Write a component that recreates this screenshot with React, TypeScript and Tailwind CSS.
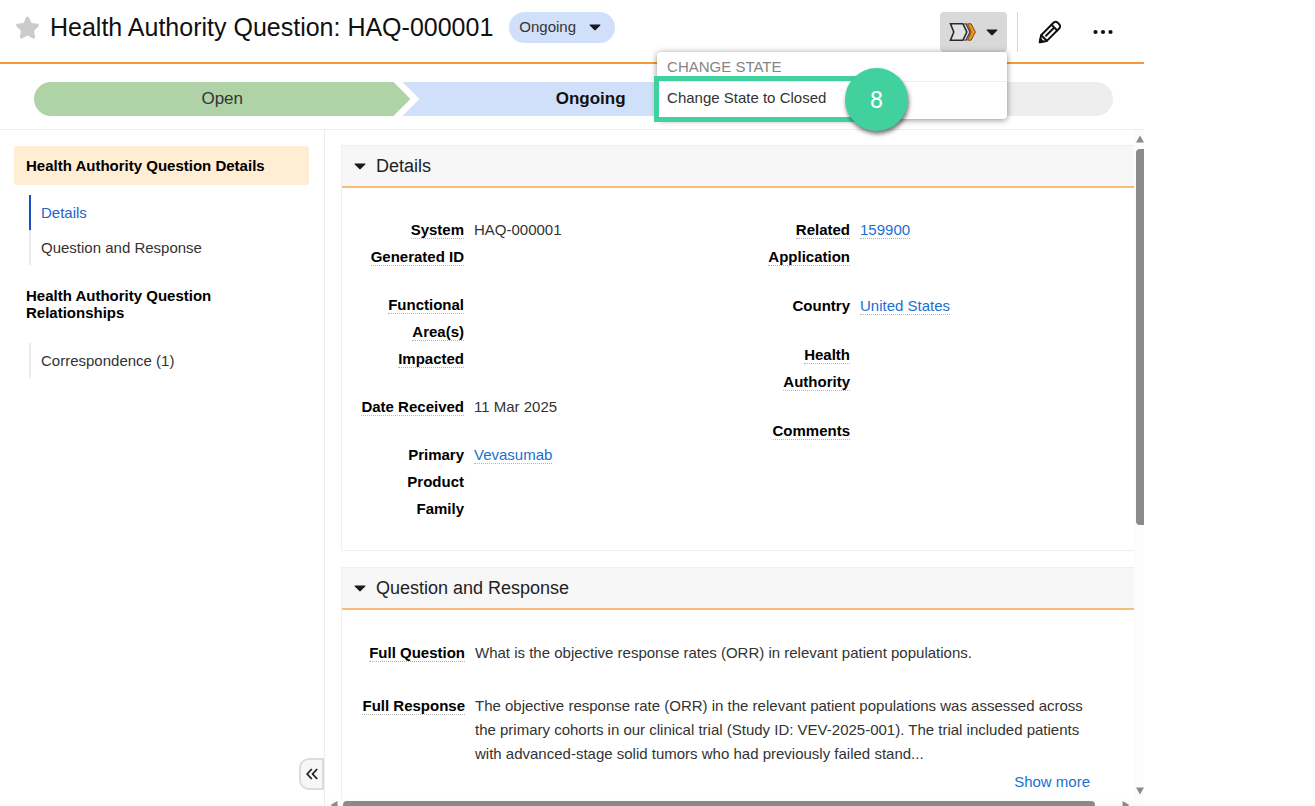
import { ReactNode } from "react"
import clsx from "clsx"
import { FaStar } from "react-icons/fa6"

interface Field {
    label: string
    value?: string
    link?: boolean
    plain?: boolean
}

const leftFields: Field[] = [
    { label: "System Generated ID", value: "HAQ-000001" },
    { label: "Functional Area(s) Impacted" },
    { label: "Date Received", value: "11 Mar 2025" },
    { label: "Primary Product Family", value: "Vevasumab", link: true, plain: true },
]

const rightFields: Field[] = [
    { label: "Related Application", value: "159900", link: true },
    { label: "Country", value: "United States", link: true, plain: true },
    { label: "Health Authority" },
    { label: "Comments" },
]

function Caret({ className }: { className?: string }) {
    return (
        <svg viewBox="0 0 12 7" className={clsx("w-3 h-[7px] shrink-0", className)} fill="#1a1a1a" aria-hidden="true">
            <path d="M1.2 0.5h9.6c.6 0 .8.6.4 1L6.7 6.100c-.4.4-1 .4-1.400 0L.8 1.500C.4 1.100.6.5 1.200.5z" />
        </svg>
    )
}

function WorkflowIcon() {
    return (
        <svg viewBox="0 0 28 20" className="w-7 h-5" fill="none" aria-hidden="true">
            <path d="M1.5 1.8H14l3.800 8.200-3.800 8.200H1.500L4.800 10z" fill="#e2e2e2" stroke="#2b2b2b" strokeWidth="1.6" />
            <path d="M15.500 1.800h1.500l4 8.200-4 8.200h-1.500" stroke="#3a3a3a" strokeWidth="1.2" />
            <path d="M18.500 1.800h3.600l4.300 8.200-4.300 8.200h-3.600l3.700-8.200z" fill="#ff8f0f" stroke="#5a4326" strokeWidth=".9" />
        </svg>
    )
}

function PencilIcon() {
    return (
        <svg viewBox="0 0 24 24" className="size-6" fill="none" stroke="#111" strokeWidth="2" strokeLinejoin="round" strokeLinecap="round" aria-hidden="true">
            <path d="M1.8 22.2l1.3-7L15.5 2.8c1.2-1.2 3-1.2 4.2 0l1.5 1.5c1.2 1.2 1.2 3 0 4.200L8.800 20.900z" />
            <path d="M13.5 4.8l5.7 5.7M3.2 15.2l5.6 5.600M15 8.800l-7 7" />
            <path d="M1.8 22.2l.6-3.2 2.6 2.600z" fill="#111" />
        </svg>
    )
}

function FieldRow({ field }: { field: Field }) {
    return (
        <div className="flex gap-[10px] leading-[27px]">
            <dt className="w-[106px] shrink-0 text-right font-bold text-black">
                <span className={field.plain ? "" : "border-b border-dotted border-[#b5b5b5]"}>{field.label}</span>
            </dt>
            <dd>
                {field.link ? (
                    <a href="#" className="text-[#1a6fd0] border-b border-dotted border-[#b5b5b5]">{field.value}</a>
                ) : field.value}
            </dd>
        </div>
    )
}

function Section({ title, className, children }: { title: string, className?: string, children: ReactNode }) {
    return (
        <section className={clsx("border-t border-l border-[#efefef]", className)}>
            <h2 className="bg-[#f7f7f7] border-b-2 border-[#fbbb78]">
                <button className="flex items-center gap-[10px] w-full h-10 pl-3 text-lg text-[#222]">
                    <Caret />
                    {title}
                </button>
            </h2>
            {children}
        </section>
    )
}

function Arrow({ className }: { className?: string }) {
    return (
        <svg viewBox="0 0 8 8" className={clsx("size-2 shrink-0", className)} fill="#8a8a8a" aria-hidden="true">
            <path d="M4 .5L8 7.5H0z" />
        </svg>
    )
}

export default function App() {
    return (
        <div className="flex flex-col w-[87%] h-screen overflow-hidden bg-white text-[15px] text-[#333] font-['Liberation_Sans',Arial,sans-serif]">
            <header className="flex shrink-0 items-start justify-between h-16 pt-3 pl-[15px] pr-[31px] border-b-2 border-[#f29a38]">
                <div className="flex items-center h-[31px]">
                    <button aria-label="Favorite">
                        <FaStar className="size-[25px] text-[#cbcbcb]" />
                    </button>
                    <h1 className="ml-[10px] text-[25px] text-[#111] whitespace-nowrap">Health Authority Question: HAQ-000001</h1>
                    <div className="relative ml-4">
                        <select aria-label="State" className="appearance-none h-[31px] w-[106px] pl-[10px] rounded-full bg-[#d1e0fa]">
                            <option>Ongoing</option>
                        </select>
                        <Caret className="absolute right-[14px] top-3 pointer-events-none" />
                    </div>
                </div>

                <div className="flex items-center">
                    <div className="relative">
                        <button aria-label="Change state" className="flex items-center justify-between w-[67px] h-10 pl-[9px] pr-[9px] rounded-[4px] bg-[#d9d9d9]">
                            <WorkflowIcon />
                            <Caret />
                        </button>
                        <div className="absolute z-10 right-0 top-full w-[350px] rounded-[4px] bg-white shadow-[0_1px_6px_rgba(0,0,0,0.45)]">
                            <h3 className="h-[30px] pl-[10px] leading-[30px] text-[#858585] border-b border-[#eee]">CHANGE STATE</h3>
                            <div className="relative">
                                <button className="block w-full h-[37px] pl-[10px] pb-1 text-left">Change State to Closed</button>
                                <div className="absolute -left-[3px] -top-[6px] w-[220px] h-[46px] border-5 border-[#41d19f] pointer-events-none"></div>
                                <div className="absolute left-[188px] -top-[14px] flex items-center justify-center size-[63px] rounded-full bg-[#41d19f] text-white text-2xl font-[Roboto,sans-serif] shadow-[1px_3px_4px_rgba(0,0,0,0.55)] pointer-events-none">8</div>
                            </div>
                        </div>
                    </div>
                    <div className="w-px h-10 ml-[10px] bg-[#d6d6d6]"></div>
                    <button aria-label="Edit" className="ml-5">
                        <PencilIcon />
                    </button>
                    <button aria-label="More actions" className="ml-[31px]">
                        <svg viewBox="0 0 20 6" className="w-5 h-[6px]" fill="#111" aria-hidden="true">
                            <circle cx="2.5" cy="3" r="2.1" />
                            <circle cx="10" cy="3" r="2.1" />
                            <circle cx="17.5" cy="3" r="2.1" />
                        </svg>
                    </button>
                </div>
            </header>

            <ol className="flex shrink-0 pt-[18px] pb-[13px] pl-[34px] pr-[31px] text-[17px] leading-[34px] text-center border-b border-[#ededed]">
                <li className="flex-[11] h-[34px] rounded-l-full bg-[#b0d2a7] [clip-path:polygon(0_0,calc(100%-17px)_0,100%_50%,calc(100%-17px)_100%,0_100%)]">Open</li>
                <li className="flex-[11] h-[34px] -ml-2 bg-[#d1e0fa] font-bold text-[#111] [clip-path:polygon(0_0,calc(100%-17px)_0,100%_50%,calc(100%-17px)_100%,0_100%,17px_50%)]">Ongoing</li>
                <li className="flex-[10] h-[34px] -ml-2 rounded-r-full bg-[#ededed] [clip-path:polygon(0_0,100%_0,100%_100%,0_100%,17px_50%)]"></li>
            </ol>

            <div className="flex flex-1 min-h-0">
                <nav className="relative w-[325px] shrink-0 pt-4 border-r border-[#ededed]">
                    <h2 className="h-[39px] ml-[14px] mr-[15px] pl-3 leading-[40px] rounded-[3px] bg-[#ffedd4] font-bold text-black">Health Authority Question Details</h2>
                    <ul className="mt-[10px] ml-[29px] leading-[35px]">
                        <li><a href="#" className="block pl-[10px] border-l-2 border-[#1b4fc0] text-[#2563c9]">Details</a></li>
                        <li><a href="#" className="block pl-[10px] border-l-2 border-[#ebebeb]">Question and Response</a></li>
                    </ul>
                    <h2 className="mt-[22px] ml-[26px] w-[220px] leading-[17px] font-bold text-black">Health Authority Question Relationships</h2>
                    <ul className="mt-[22px] ml-[29px] leading-[35px]">
                        <li><a href="#" className="block pl-[10px] border-l-2 border-[#ebebeb]">Correspondence (1)</a></li>
                    </ul>
                    <button aria-label="Collapse panel" className="absolute right-0 bottom-4 flex items-center justify-center w-[25px] h-8 rounded-l-[10px] border-2 border-[#dcdcdc] bg-[#f7f7f7]">
                        <svg viewBox="0 0 12 12" className="size-3 shrink-0" fill="none" stroke="#222" strokeWidth="1.8" aria-hidden="true">
                            <path d="M5.8 1L1.2 6l4.6 5M11.2 1L6.6 6l4.600 5" />
                        </svg>
                    </button>
                </nav>

                <main className="flex flex-col flex-1 min-w-0">
                    <div className="flex flex-1 min-h-0">
                        <div className="flex-1 min-w-0 overflow-hidden pt-[15px] pl-4">
                            <Section title="Details" className="border-b">
                                <div className="grid grid-cols-2 py-[28px] pl-4 pr-1">
                                    <dl className="flex flex-col gap-[21px]">
                                        {leftFields.map(field => <FieldRow key={field.label} field={field} />)}
                                    </dl>
                                    <dl className="flex flex-col gap-[22px]">
                                        {rightFields.map(field => <FieldRow key={field.label} field={field} />)}
                                    </dl>
                                </div>
                            </Section>

                            <Section title="Question and Response" className="mt-4">
                                <dl className="flex flex-col gap-[29px] pt-[31px] pb-10 pl-4 pr-11 leading-6">
                                    <div className="flex gap-[10px]">
                                        <dt className="w-[107px] shrink-0 text-right font-bold text-black">
                                            <span className="border-b border-dotted border-[#b5b5b5]">Full Question</span>
                                        </dt>
                                        <dd>What is the objective response rates (ORR) in relevant patient populations.</dd>
                                    </div>
                                    <div className="flex gap-[10px]">
                                        <dt className="w-[107px] shrink-0 text-right font-bold text-black">
                                            <span className="border-b border-dotted border-[#b5b5b5]">Full Response</span>
                                        </dt>
                                        <dd className="flex-1">
                                            <p>The objective response rate (ORR) in the relevant patient populations was assessed across the primary cohorts in our clinical trial (Study ID: VEV-2025-001). The trial included patients with advanced-stage solid tumors who had previously failed stand...</p>
                                            <button className="block mt-1 ml-auto text-[#1a6fd0]">Show more</button>
                                        </dd>
                                    </div>
                                </dl>
                            </Section>
                        </div>
                        <div className="flex flex-col w-[10px] pl-[2px] pt-[5px] pb-1 bg-[#fcfcfc]">
                            <Arrow />
                            <div className="w-2 h-[57%] mt-[6px] rounded-l-[4px] bg-[#8a8a8a]"></div>
                            <Arrow className="mt-auto rotate-180" />
                        </div>
                    </div>
                    <div className="flex h-[7px] shrink-0 items-start pl-[5px] pr-[14px] pt-[2px] overflow-hidden bg-[#fcfcfc]">
                        <Arrow className="-rotate-90" />
                        <div className="w-[94%] h-2 ml-[5px] rounded-t-[4px] bg-[#8a8a8a]"></div>
                        <Arrow className="ml-auto rotate-90" />
                    </div>
                </main>
            </div>
        </div>
    )
}
